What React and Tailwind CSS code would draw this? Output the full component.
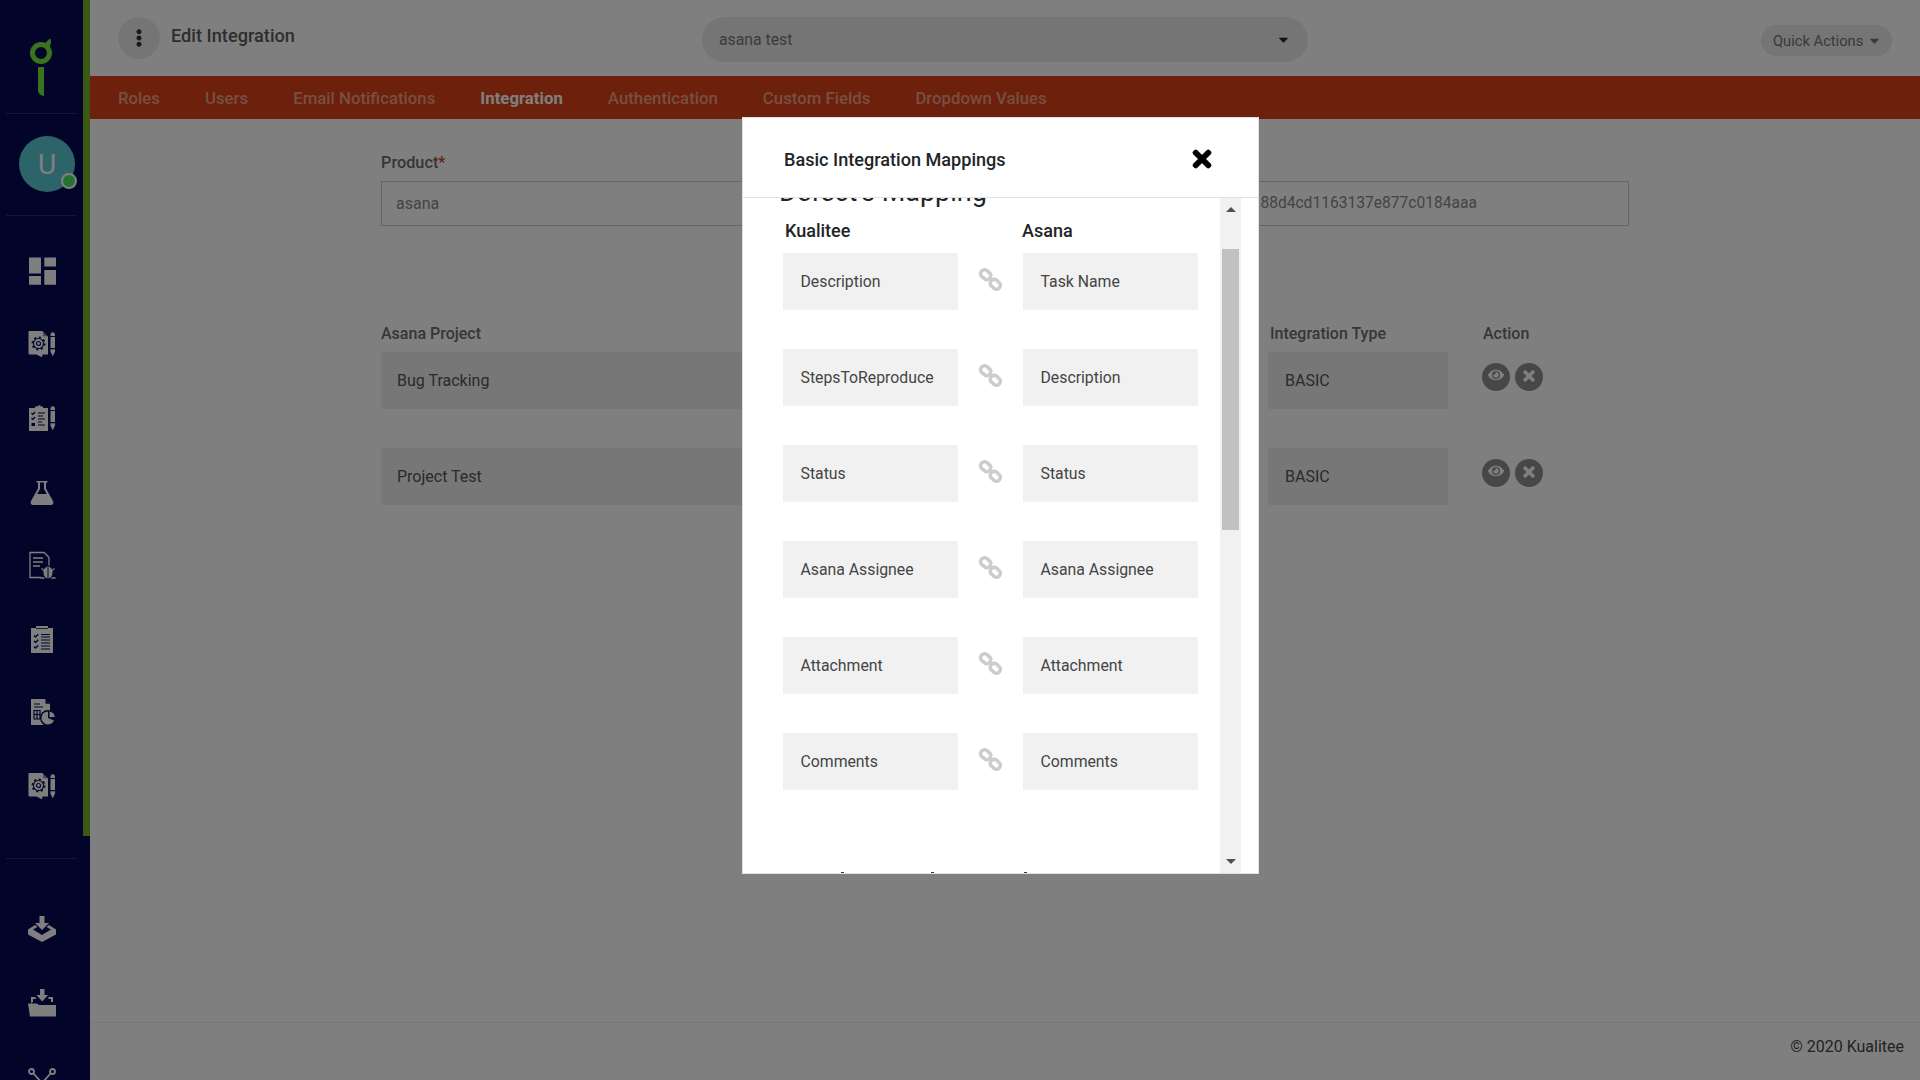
import React from "react";
import { FaEye, FaTimes, FaEllipsisV, FaCaretDown } from "react-icons/fa";

const NAVY = "#060854";

const Pencil = () => (
  <g>
    <path d="M22.5 4.5a2.2 2.2 0 0 1 4.5 0V6h-4.5z" fill="#fff" />
    <rect x="22.5" y="7" width="4.5" height="11" fill="#fff" />
    <path d="M22.5 19.2H27v2.5l-2.25 4.6-2.25-4.6z" fill="#fff" />
  </g>
);

const DocGear = () => (
  <svg viewBox="0 0 28 28" className="w-[28px] h-[28px]">
    <path d="M1.5 1h13L20 6.5v18h-5.5l-.5 2.7-5.5-2.7h-7a1 1 0 0 1-1-1V2a1 1 0 0 1 1-1z" fill="#fff" />
    <path d="M15 1l5 5.2h-5z" fill={NAVY} opacity=".45" />
    <circle cx="10.5" cy="13.5" r="5" fill="none" stroke={NAVY} strokeWidth="1.1" />
    <circle cx="10.5" cy="13.5" r="6.2" fill="none" stroke={NAVY} strokeWidth="1.6" strokeDasharray="2.2 2.6" />
    <circle cx="10.5" cy="13.5" r="2" fill="none" stroke={NAVY} strokeWidth="1.2" />
    <Pencil />
  </svg>
);

const ClipPencil = () => (
  <svg viewBox="0 0 28 28" className="w-[28px] h-[28px]">
    <path d="M1 4h6V2.5h2.5a1.8 1.8 0 0 1 3.4 0H15V4h5v23H1z" fill="#fff" />
    <path d="M3.5 9l1.3 1.3L7.2 8M3.5 14l1.3 1.3L7.2 13" fill="none" stroke={NAVY} strokeWidth="1.2" />
    <rect x="3.5" y="19" width="3.5" height="3" fill={NAVY} />
    <path d="M10 9h7M10 12h5M10 15h7M10 18h4M10 21h7" stroke={NAVY} strokeWidth="1.2" />
    <Pencil />
  </svg>
);

const Flask = () => (
  <svg viewBox="0 0 28 28" className="w-[28px] h-[28px]">
    <path d="M8.5 3h11v1.5H18v6L25 23c1 2-.3 4-2 4H5c-1.7 0-3-2-2-4l7-12.500v-6H8.500z" fill="#fff" />
    <path d="M12 4.500h4v6.500l2.800 5H9.200L12 11z" fill={NAVY} />
  </svg>
);

const DocBug = () => (
  <svg viewBox="0 0 28 28" className="w-[28px] h-[28px]">
    <path d="M13 26.500H2V1.500h14l5 5v8" fill="none" stroke="#fff" strokeWidth="1.300" />
    <path d="M5 7h10M5 11h10M5 15h7" stroke="#fff" strokeWidth="1.500" />
    <ellipse cx="20" cy="21.500" rx="4.500" ry="6" fill="#fff" />
    <path d="M20 16v11.500" stroke={NAVY} strokeWidth="1" />
    <path d="M13.500 17.500l3 2.500M26.500 17.500l-3 2.500M12.500 27h4M23.500 27h4" stroke="#fff" strokeWidth="1.300" />
  </svg>
);

const ClipCheck = () => (
  <svg viewBox="0 0 28 28" className="w-[28px] h-[28px]">
    <path d="M3 3h5V1h12v2h5v25H3z" fill="#fff" />
    <path d="M6 10.500l1.500 1.500 2.800-2.800M6 16l1.500 1.500 2.800-2.800M6 21.500l1.500 1.500 2.800-2.800" fill="none" stroke={NAVY} strokeWidth="1.300" />
    <path d="M13 9.500h9M13 12h9M13 15h9M13 18h9M13 21h9M13 24h9" stroke={NAVY} strokeWidth="1.200" />
    <path d="M8 3.500h12" stroke={NAVY} strokeWidth=".8" />
  </svg>
);

const DocPie = () => (
  <svg viewBox="0 0 28 28" className="w-[28px] h-[28px]">
    <path d="M3 1h14l5 5v21H3z" fill="#fff" />
    <path d="M17.500 1l4.500 4.700h-4.500z" fill={NAVY} />
    <path d="M6 6h6M6 9h9" stroke={NAVY} strokeWidth="1.200" />
    <path d="M6 12.500h6v8.500H6zM9 12.500v8.500M6 16.500h6" fill="none" stroke={NAVY} strokeWidth="1.200" />
    <circle cx="20" cy="20" r="8" fill={NAVY} />
    <path d="M20 13.500a6.500 6.500 0 1 0 6 9l-6-2.500z" fill="#fff" />
    <path d="M21.500 13.500a6.500 6.500 0 0 1 5.300 5.500l-5.300.3z" fill="#fff" />
  </svg>
);

const Tray = () => (
  <svg viewBox="0 0 28 28" className="w-[28px] h-[28px]">
    <path d="M11.500 0h5v7h4.500l-7 7-7-7h4.500z" fill="#fff" />
    <path d="M0 13.500L7 9l2.500 2L5 13.500l9 5.500 9-5.500-4.500-2.500 2.500-2 7 4.500v5L14 26 0 18.500z" fill="#fff" />
  </svg>
);

const FolderDown = () => (
  <svg viewBox="0 0 28 28" className="w-[28px] h-[28px]">
    <path d="M12 0h4.500v6H20l-5.750 6.500L8.500 6H12z" fill="#fff" />
    <path d="M3 14V8h4l1.500 2h-3.500v3zM20.500 8H25v5h-2v-3h-2.500z" fill="#fff" />
    <path d="M0 14.500h9l2 1.500h17v11.500H2z" fill="#fff" />
  </svg>
);

const Network = () => (
  <svg viewBox="0 -5 28 28" className="w-[28px] h-[28px]">
    <circle cx="3.500" cy="3.500" r="2.500" fill="none" stroke="#fff" strokeWidth="1.800" />
    <circle cx="24.500" cy="3.500" r="2.500" fill="none" stroke="#fff" strokeWidth="1.800" />
    <path d="M5.500 5.500L14 15l8.500-9.500" fill="none" stroke="#fff" strokeWidth="1.800" />
  </svg>
);

const Dashboard = () => (
  <svg viewBox="0 0 28 28" className="w-[28px] h-[28px]">
    <path d="M1 .5h12v16H1zM16.300 .5H28v9H16.300zM1 19.100h12v8.600H1zM16.300 12.900H28v14.800H16.300z" fill="#fff" />
  </svg>
);

const ChainLink = () => (
  <svg viewBox="-2 -2 28 28" className="w-[27px] h-[27px] shrink-0" fill="none" stroke="#cccccc" strokeWidth="3.600">
    <rect x="1.500" y="3" width="11" height="8" rx="3.500" transform="rotate(42 7 7)" />
    <rect x="11.500" y="13" width="11" height="8" rx="3.500" transform="rotate(42 17 17)" />
  </svg>
);

const NavItem = ({ children }) => (
  <div className="h-[73.6px] flex items-center pl-[28px] shrink-0">{children}</div>
);

const Sidebar = () => (
  <aside className="relative w-[90px] h-full shrink-0 bg-[#060854] overflow-hidden flex flex-col">
    <div className="absolute right-0 top-0 w-[7px] h-[836px] bg-[#74b428]" />
    <div className="h-[113px] shrink-0 pl-[20px] pt-[25px]">
      <svg viewBox="0 0 60 80" className="w-[60px] h-[80px]">
        <circle cx="21" cy="28" r="8.500" fill="none" stroke="#72e83a" strokeWidth="5" />
        <path d="M25 19c1-2 3-4 5-5.500 1.500 2 1.500 6-1 9z" fill="#72e83a" />
        <path d="M18 42h6v29c-3.500-.5-6-2.500-6-6z" fill="#72e83a" />
      </svg>
    </div>
    <div className="ml-[6px] w-[71px] h-px bg-[#2a2c6c] shrink-0" />
    <div className="h-[101px] shrink-0 pl-[19px] pt-[22px]">
      <div className="relative w-[56px] h-[56px] rounded-full bg-[#5ac8d2] flex items-center justify-center pt-[2px] text-white text-[28px] font-['Roboto',sans-serif]">
        U
        <span className="absolute left-[42px] top-[37px] w-[16px] h-[16px] rounded-full bg-[#44ea5c] border-2 border-white" />
      </div>
    </div>
    <div className="ml-[6px] w-[71px] h-px bg-[#2a2c6c] shrink-0" />
    <div className="pt-[18px] flex flex-col shrink-0">
      <NavItem><Dashboard /></NavItem>
      <NavItem><DocGear /></NavItem>
      <NavItem><ClipPencil /></NavItem>
      <NavItem><Flask /></NavItem>
      <NavItem><DocBug /></NavItem>
      <NavItem><ClipCheck /></NavItem>
      <NavItem><DocPie /></NavItem>
      <NavItem><DocGear /></NavItem>
    </div>
    <div className="mt-[35px] ml-[6px] w-[71px] h-px bg-[#2a2c6c] shrink-0" />
    <div className="pt-[34px] flex flex-col shrink-0">
      <NavItem><Tray /></NavItem>
      <NavItem><FolderDown /></NavItem>
      <NavItem><Network /></NavItem>
    </div>
  </aside>
);

const TABS = ["Roles", "Users", "Email Notifications", "Integration", "Authentication", "Custom Fields", "Dropdown Values"];

const ROWS = [
  ["Description", "Task Name"],
  ["StepsToReproduce", "Description"],
  ["Status", "Status"],
  ["Asana Assignee", "Asana Assignee"],
  ["Attachment", "Attachment"],
  ["Comments", "Comments"],
];

const TableRow = ({ name }) => (
  <div className="flex mb-[39.500px]">
    <div className="w-[869px] h-[56.500px] bg-[#eeeeee] flex items-center pl-[16px] pt-px text-[16px] text-[#555]">{name}</div>
    <div className="ml-[18px] w-[180px] h-[56.500px] bg-[#eeeeee] flex items-center pl-[17px] pt-px text-[16px] text-[#555]">BASIC</div>
    <div className="ml-[34px] pt-[11px] flex gap-[5px]">
      <span className="w-[28px] h-[28px] rounded-full bg-[#8e8e8e] flex items-center justify-center text-white pb-[5px]"><FaEye size={16} /></span>
      <span className="w-[28px] h-[28px] rounded-full bg-[#8e8e8e] flex items-center justify-center text-white pb-[3px]"><FaTimes size={16} className="[stroke-width:30]" /></span>
    </div>
  </div>
);

const Main = () => (
  <main className="flex-1 h-full flex flex-col min-w-0">
    <header className="h-[76px] shrink-0 flex items-start">
      <div className="w-[612px] shrink-0 flex items-start pl-[28px] pt-[17px]">
        <span className="w-[42px] h-[42px] rounded-full bg-[#ebebeb] flex items-center justify-center text-[#333]"><FaEllipsisV size={18} /></span>
        <span className="ml-[11px] mt-[6px] text-[18.200px] leading-[26px] font-medium text-[#5c5c5c]">Edit Integration</span>
      </div>
      <div className="mt-[17px] w-[606px] h-[45px] rounded-[23px] bg-[#ebebeb] flex items-center justify-between pl-[17px] pr-[17px] text-[15.800px] text-[#777]">
        <span className="pt-px">asana test</span>
        <span className="text-[#222]"><FaCaretDown size={15} /></span>
      </div>
      <div className="ml-auto mr-[28px] mt-[25px] w-[131px] h-[31px] rounded-[16px] bg-[#ebebeb] flex items-center pl-[12px] gap-[4px] text-[14.700px] text-[#747474]">
        <span className="pt-px">Quick Actions</span>
        <FaCaretDown size={15} />
      </div>
    </header>
    <nav className="h-[43px] shrink-0 bg-[#da4016] flex items-center pl-[28px] gap-[45px] text-[16.800px] font-medium text-[#ec9f8a]">
      {TABS.map((t) => (
        <span key={t} className={t === "Integration" ? "pt-[2px] text-white font-bold" : "pt-[2px]"}>{t}</span>
      ))}
    </nav>
    <section className="pl-[291px] pt-[32px] w-[1539px]">
      <div className="text-[16.300px] leading-[24px] font-medium text-[#6c6c6c] mb-[6px]">Product<span className="text-[#da4016]">*</span></div>
      <div className="flex gap-[20px]">
        <div className="w-[600px] h-[45px] border border-[#cccccc] flex items-center pl-[14px] text-[16px] text-[#888]">asana</div>
        <div className="flex-1 h-[45px] border border-[#cccccc] flex items-center justify-end pr-[151px] text-[15.600px] text-[#888]">88d4cd1163137e877c0184aaa</div>
      </div>
      <div className="mt-[96px] mb-[6px] flex text-[16px] leading-[24px] font-medium text-[#6c6c6c]">
        <span className="w-[869px]">Asana Project</span>
        <span className="ml-[20px] w-[178px]">Integration Type</span>
        <span className="ml-[35px]">Action</span>
      </div>
      <TableRow name="Bug Tracking" />
      <TableRow name="Project Test" />
    </section>
    <footer className="mt-auto h-[58px] shrink-0 border-t border-[#eeeeee] flex items-center justify-end pr-[16px] pb-[10px] text-[16px] text-[#444]">
      © 2020 Kualitee
    </footer>
  </main>
);

const Modal = () => (
  <div className="fixed left-[742px] top-[117px] w-[517px] h-[757px] bg-white border border-[#dee2e6] flex flex-col overflow-hidden text-[#212529]">
    <div className="relative z-10 h-[80px] shrink-0 bg-white border-b border-[#dee2e6] flex items-center justify-between pl-[41px] pr-[43px]">
      <span className="text-[18.100px] font-medium pt-[4px]">Basic Integration Mappings</span>
      <span className="text-black pt-[3px]"><FaTimes size={26} className="[stroke-width:20]" /></span>
    </div>
    <div className="flex-1 min-h-0 flex">
      <div className="flex-1 min-w-0 overflow-hidden pl-[36px]">
        <div className="-mt-[22px] text-[27px] leading-[32px]">Defect's Mapping</div>
        <div className="mt-[11px] mb-[10px] flex text-[18px] leading-[24px] font-medium">
          <span className="ml-[6px] w-[237px]">Kualitee</span>
          <span>Asana</span>
        </div>
        {ROWS.map(([a, b]) => (
          <div key={a} className="ml-[4px] h-[57px] mb-[39px] flex">
            <div className="w-[175px] bg-[#f1f1f1] flex items-center pl-[17.500px] pt-px text-[15.800px] text-[#444]">{a}</div>
            <div className="w-[65px] flex items-center justify-center pb-[4px]"><ChainLink /></div>
            <div className="w-[175px] bg-[#f1f1f1] flex items-center pl-[17.500px] pt-px text-[15.800px] text-[#444]">{b}</div>
          </div>
        ))}
        <div className="mt-[82px] flex ml-[62px]">
          <span className="w-[3px] h-[4px] bg-[#333]" />
          <span className="ml-[87px] w-[3px] h-[4px] bg-[#333]" />
          <span className="ml-[90px] w-[3px] h-[4px] bg-[#333]" />
        </div>
      </div>
      <div className="w-[21px] shrink-0 mr-[17px] bg-[#f1f1f1] flex flex-col items-center pt-[9px] pb-[9px]">
        <span className="w-0 h-0 border-x-[5px] border-x-transparent border-b-[5px] border-b-[#505050]" />
        <span className="mt-[37px] w-[17px] h-[281px] bg-[#c1c1c1]" />
        <span className="mt-auto w-0 h-0 border-x-[5px] border-x-transparent border-t-[5px] border-t-[#505050]" />
      </div>
    </div>
  </div>
);

export default function App() {
  return (
    <div className="relative h-screen w-full overflow-hidden flex bg-white font-['Roboto',sans-serif]">
      <Sidebar />
      <Main />
      <div className="fixed inset-0 bg-black/50" />
      <Modal />
    </div>
  );
}
